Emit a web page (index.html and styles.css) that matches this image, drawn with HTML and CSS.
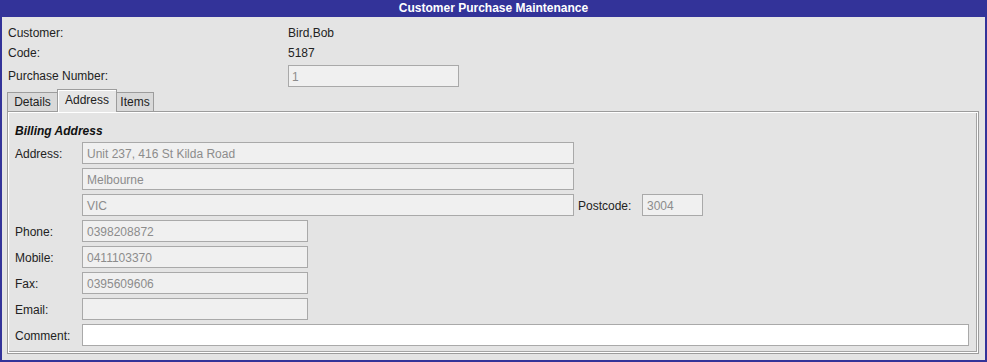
FILE: index.html
```html
<!DOCTYPE html>
<html>
<head>
<meta charset="utf-8">
<link rel="stylesheet" href="styles.css">
</head>
<body>
<div class="frame">
  <div class="titlebar">Customer Purchase Maintenance</div>
  <div class="body">
    <div class="info">
      <div class="info-label">Customer:</div><div class="info-value">Bird,Bob</div>
      <div class="info-label">Code:</div><div class="info-value">5187</div>
      <div class="info-label info-last">Purchase Number:</div><div class="info-value info-last"><div class="field purchase">1</div></div>
    </div>
    <div class="tabs">
      <div class="tab tab-details">Details</div>
      <div class="tab tab-address active">Address</div>
      <div class="tab tab-items">Items</div>
    </div>
    <div class="panel">
      <div class="section-title">Billing Address</div>
      <div class="row"><div class="label">Address:</div><div class="field wide">Unit 237, 416 St Kilda Road</div></div>
      <div class="row"><div class="label"></div><div class="field wide">Melbourne</div></div>
      <div class="row"><div class="label"></div><div class="field wide">VIC</div><div class="label postcode-label">Postcode:</div><div class="field postcode">3004</div></div>
      <div class="row"><div class="label">Phone:</div><div class="field medium">0398208872</div></div>
      <div class="row"><div class="label">Mobile:</div><div class="field medium">0411103370</div></div>
      <div class="row"><div class="label">Fax:</div><div class="field medium">0395609606</div></div>
      <div class="row"><div class="label">Email:</div><div class="field medium"></div></div>
      <div class="row"><div class="label">Comment:</div><div class="field comment"></div></div>
    </div>
  </div>
</div>
</body>
</html>
```

FILE: styles.css
```css
* { box-sizing: border-box; }
html, body { margin: 0; padding: 0; }
body {
  font-family: "Liberation Sans", Arial, sans-serif;
  font-size: 12px;
  color: #222;
  background: #ffffff;
}
.frame {
  width: 987px;
  height: 362px;
  background: #333399;
  padding: 0 2px 2px 2px;
  display: flex;
  flex-direction: column;
}
.titlebar {
  height: 17px;
  line-height: 17px;
  color: #ffffff;
  font-weight: bold;
  text-align: center;
  font-size: 12px;
  margin: 0 -2px;
}
.body {
  flex: 1;
  background: #e4e4e4;
  padding: 6px 0 0 5px;
}
.info {
  display: grid;
  grid-template-columns: 280px 171px;
  grid-template-rows: 20px 20px 24px;
  padding-left: 1px;
}
.info-label, .info-value {
  line-height: 20px;
}
.info-last {
  margin-top: 2px;
  line-height: 23px;
}
.field {
  height: 22px;
  line-height: 22px;
  border: 1px solid #a9a9a9;
  background: #f0f0f0;
  color: #8c8c8c;
  padding-left: 4px;
  white-space: nowrap;
  overflow: hidden;
}
.purchase { width: 171px; padding-left: 3px; }
.tabs {
  display: flex;
  align-items: flex-end;
  height: 22px;
  margin-top: 2px;
  position: relative;
  z-index: 1;
}
.tab {
  height: 19px;
  line-height: 18px;
  border: 1px solid #9c9c9c;
  border-bottom: none;
  background: #d9d9d9;
  text-align: center;
  color: #222;
}
.tab + .tab { margin-left: -1px; }
.tab-details { width: 51px; }
.tab-address { width: 60px; }
.tab-items { width: 38px; }
.tab.active {
  height: 23px;
  margin-bottom: -1px;
  line-height: 20px;
  background: #e6e6e6;
  box-shadow: inset 1px 1px 0 #ffffff;
  position: relative;
  z-index: 2;
}
.panel {
  width: 972px;
  height: 243px;
  border: 1px solid #9c9c9c;
  background: #e4e4e4;
  box-shadow: inset 1px 1px 0 #ffffff, inset -1px -1px 0 #ffffff, inset -2px -2px 0 #a4a4a4;
  padding: 11px 0 0 7px;
  display: flex;
  flex-direction: column;
  gap: 4px;
}
.section-title {
  font-weight: bold;
  font-style: italic;
  line-height: 16px;
  height: 16px;
  margin-bottom: -1px;
  color: #111;
}
.row {
  display: flex;
  align-items: stretch;
  height: 22px;
}
.label {
  width: 67px;
  flex: none;
  line-height: 24px;
}
.postcode-label {
  width: 64px;
  margin-left: 4px;
}
.wide { width: 492px; }
.postcode { width: 61px; }
.medium { width: 226px; }
.comment { width: 887px; background: #ffffff; }
```
